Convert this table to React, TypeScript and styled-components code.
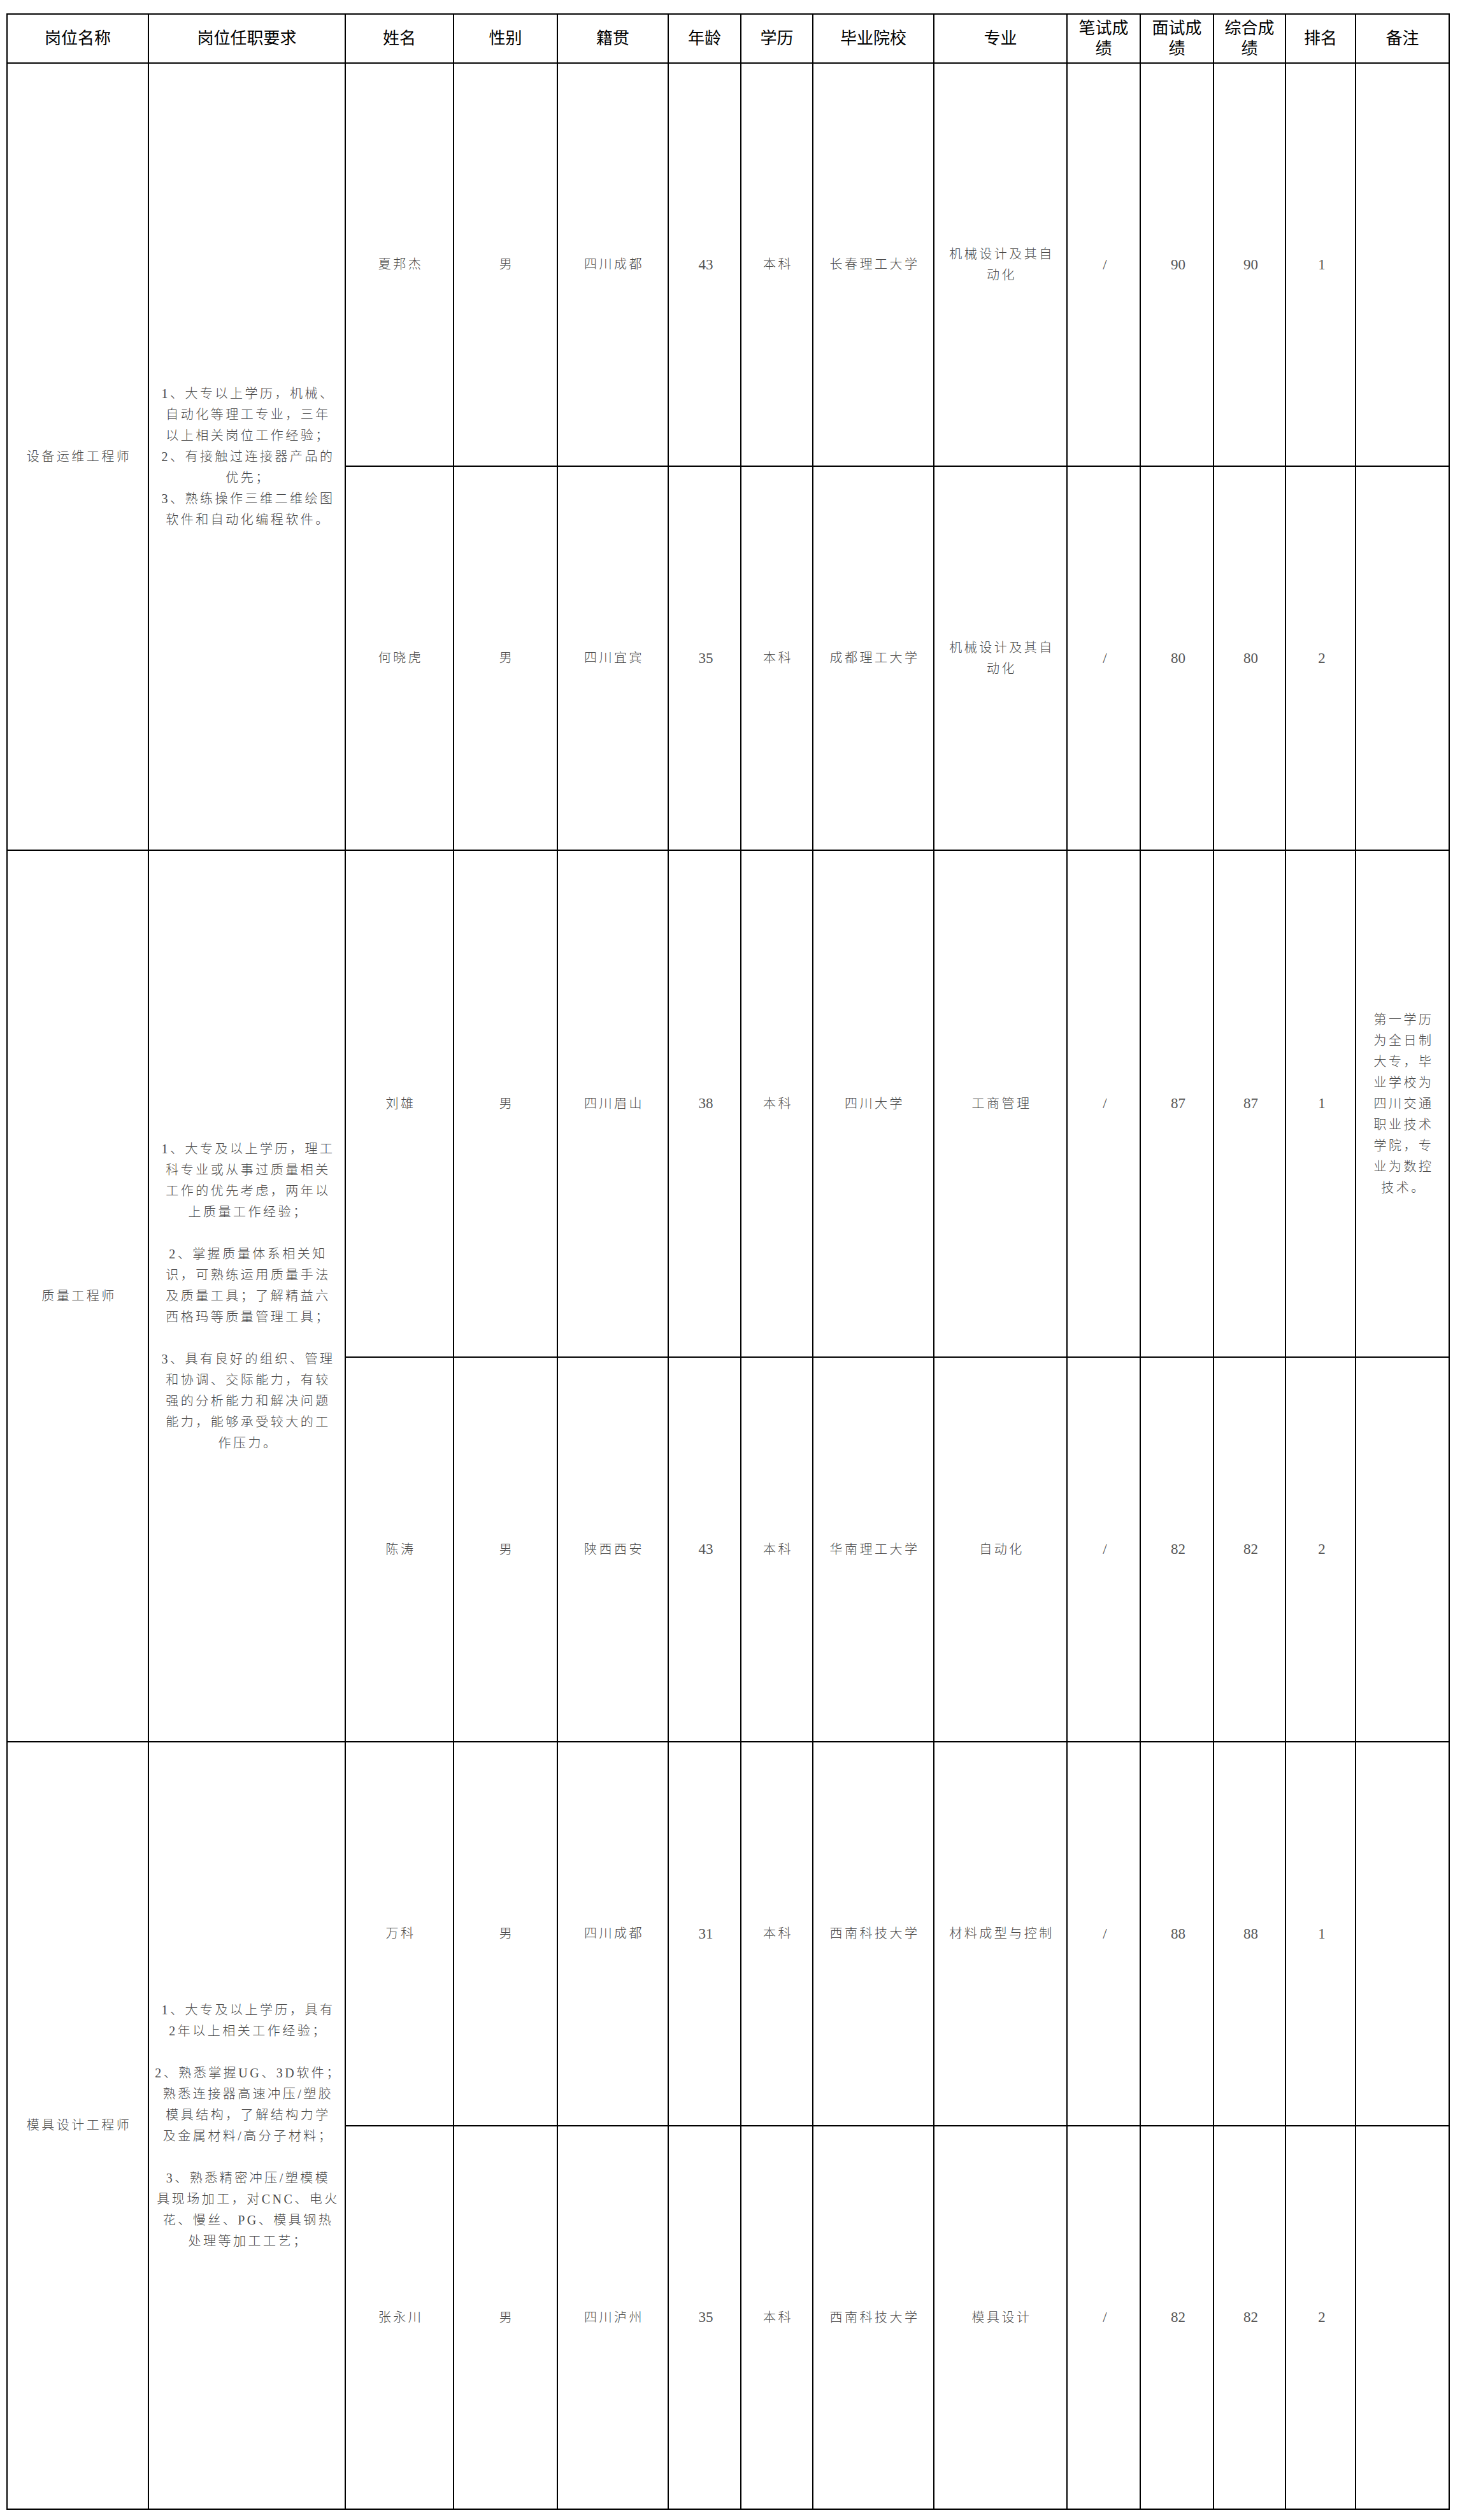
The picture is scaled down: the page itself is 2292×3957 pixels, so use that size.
import React from "react";
import styled, { createGlobalStyle } from "styled-components";

const GlobalStyle = createGlobalStyle`
  html, body {
    margin: 0;
    padding: 0;
    background: #ffffff;
  }
  body {
    font-family: "Liberation Serif", "Noto Sans CJK SC", serif;
    color: #000;
  }
`;

const Page = styled.div`
  padding: 21px 0 16px 10px;
  background: #fff;
`;

const Sheet = styled.table`
  border-collapse: collapse;
  table-layout: fixed;
  width: 2266px;
`;

const Row = styled.tr<{ $h: number }>`
  height: ${(p) => p.$h}px;
`;

const HeadCell = styled.th`
  border: 2px solid #000;
  padding: 0 4px;
  font-family: "Liberation Serif", "Noto Sans CJK SC", serif;
  font-size: 26px;
  font-weight: 400;
  line-height: 32px;
  color: #000;
  text-align: center;
  vertical-align: middle;
`;

const Cell = styled.td`
  border: 2px solid #000;
  padding: 0 0 0 4px;
  font-family: "Liberation Serif", "Noto Sans CJK SC", serif;
  font-size: 20px;
  font-weight: 300;
  letter-spacing: 3.5px;
  line-height: 33px;
  color: #4a4a4a;
  text-align: center;
  vertical-align: middle;
`;

const Num = styled.span`
  font-family: "Liberation Serif", serif;
  font-size: 23px;
  font-weight: 400;
  letter-spacing: 0;
  color: #555;
`;

const TextBlock = styled.div`
  display: flex;
  flex-direction: column;
  align-items: center;
`;

const Line = styled.span`
  display: block;
  white-space: nowrap;
  min-height: 33px;
`;

const cols = [222, 309, 170, 163, 174, 114, 113, 190, 209, 115, 115, 113, 110, 147];

const headers: string[][] = [
  ["岗位名称"],
  ["岗位任职要求"],
  ["姓名"],
  ["性别"],
  ["籍贯"],
  ["年龄"],
  ["学历"],
  ["毕业院校"],
  ["专业"],
  ["笔试成", "绩"],
  ["面试成", "绩"],
  ["综合成", "绩"],
  ["排名"],
  ["备注"],
];

type Person = {
  name: string;
  sex: string;
  origin: string;
  age: string;
  edu: string;
  school: string;
  major: string[];
  written: string;
  interview: string;
  total: string;
  rank: string;
  note?: string[];
  height: number;
};

type Group = {
  post: string;
  req: string[];
  people: Person[];
};

const groups: Group[] = [
  {
    post: "设备运维工程师",
    req: [
      "1、大专以上学历，机械、",
      "自动化等理工专业，三年",
      "以上相关岗位工作经验；",
      "2、有接触过连接器产品的",
      "优先；",
      "3、熟练操作三维二维绘图",
      "软件和自动化编程软件。",
    ],
    people: [
      {
        name: "夏邦杰",
        sex: "男",
        origin: "四川成都",
        age: "43",
        edu: "本科",
        school: "长春理工大学",
        major: ["机械设计及其自", "动化"],
        written: "/",
        interview: "90",
        total: "90",
        rank: "1",
        height: 633,
      },
      {
        name: "何晓虎",
        sex: "男",
        origin: "四川宜宾",
        age: "35",
        edu: "本科",
        school: "成都理工大学",
        major: ["机械设计及其自", "动化"],
        written: "/",
        interview: "80",
        total: "80",
        rank: "2",
        height: 603,
      },
    ],
  },
  {
    post: "质量工程师",
    req: [
      "1、大专及以上学历，理工",
      "科专业或从事过质量相关",
      "工作的优先考虑，两年以",
      "上质量工作经验；",
      "",
      "2、掌握质量体系相关知",
      "识，可熟练运用质量手法",
      "及质量工具；了解精益六",
      "西格玛等质量管理工具；",
      "",
      "3、具有良好的组织、管理",
      "和协调、交际能力，有较",
      "强的分析能力和解决问题",
      "能力，能够承受较大的工",
      "作压力。",
    ],
    people: [
      {
        name: "刘雄",
        sex: "男",
        origin: "四川眉山",
        age: "38",
        edu: "本科",
        school: "四川大学",
        major: ["工商管理"],
        written: "/",
        interview: "87",
        total: "87",
        rank: "1",
        note: [
          "第一学历",
          "为全日制",
          "大专，毕",
          "业学校为",
          "四川交通",
          "职业技术",
          "学院，专",
          "业为数控",
          "技术。",
        ],
        height: 796,
      },
      {
        name: "陈涛",
        sex: "男",
        origin: "陕西西安",
        age: "43",
        edu: "本科",
        school: "华南理工大学",
        major: ["自动化"],
        written: "/",
        interview: "82",
        total: "82",
        rank: "2",
        height: 604,
      },
    ],
  },
  {
    post: "模具设计工程师",
    req: [
      "1、大专及以上学历，具有",
      "2年以上相关工作经验；",
      "",
      "2、熟悉掌握UG、3D软件；",
      "熟悉连接器高速冲压/塑胶",
      "模具结构，了解结构力学",
      "及金属材料/高分子材料；",
      "",
      "3、熟悉精密冲压/塑模模",
      "具现场加工，对CNC、电火",
      "花、慢丝、PG、模具钢热",
      "处理等加工工艺；",
    ],
    people: [
      {
        name: "万科",
        sex: "男",
        origin: "四川成都",
        age: "31",
        edu: "本科",
        school: "西南科技大学",
        major: ["材料成型与控制"],
        written: "/",
        interview: "88",
        total: "88",
        rank: "1",
        height: 603,
      },
      {
        name: "张永川",
        sex: "男",
        origin: "四川泸州",
        age: "35",
        edu: "本科",
        school: "西南科技大学",
        major: ["模具设计"],
        written: "/",
        interview: "82",
        total: "82",
        rank: "2",
        height: 602,
      },
    ],
  },
];

const Lines: React.FC<{ lines: string[] }> = ({ lines }) => (
  <TextBlock>
    {lines.map((l, i) => (
      <Line key={i}>{l || "\u00a0"}</Line>
    ))}
  </TextBlock>
);

export default function App() {
  return (
    <>
      <GlobalStyle />
      <Page>
        <Sheet>
          <colgroup>
            {cols.map((w, i) => (
              <col key={i} style={{ width: w }} />
            ))}
          </colgroup>
          <thead>
            <Row $h={77}>
              {headers.map((h, i) => (
                <HeadCell key={i}>
                  {h.map((t, j) => (
                    <div key={j}>{t}</div>
                  ))}
                </HeadCell>
              ))}
            </Row>
          </thead>
          <tbody>
            {groups.map((g) =>
              g.people.map((p, idx) => (
                <Row key={p.name} $h={p.height}>
                  {idx === 0 && (
                    <>
                      <Cell rowSpan={g.people.length}>{g.post}</Cell>
                      <Cell rowSpan={g.people.length}>
                        <Lines lines={g.req} />
                      </Cell>
                    </>
                  )}
                  <Cell>{p.name}</Cell>
                  <Cell>{p.sex}</Cell>
                  <Cell>{p.origin}</Cell>
                  <Cell>
                    <Num>{p.age}</Num>
                  </Cell>
                  <Cell>{p.edu}</Cell>
                  <Cell>{p.school}</Cell>
                  <Cell>
                    <Lines lines={p.major} />
                  </Cell>
                  <Cell>
                    <Num>{p.written}</Num>
                  </Cell>
                  <Cell>
                    <Num>{p.interview}</Num>
                  </Cell>
                  <Cell>
                    <Num>{p.total}</Num>
                  </Cell>
                  <Cell>
                    <Num>{p.rank}</Num>
                  </Cell>
                  <Cell>{p.note ? <Lines lines={p.note} /> : null}</Cell>
                </Row>
              ))
            )}
          </tbody>
        </Sheet>
      </Page>
    </>
  );
}
